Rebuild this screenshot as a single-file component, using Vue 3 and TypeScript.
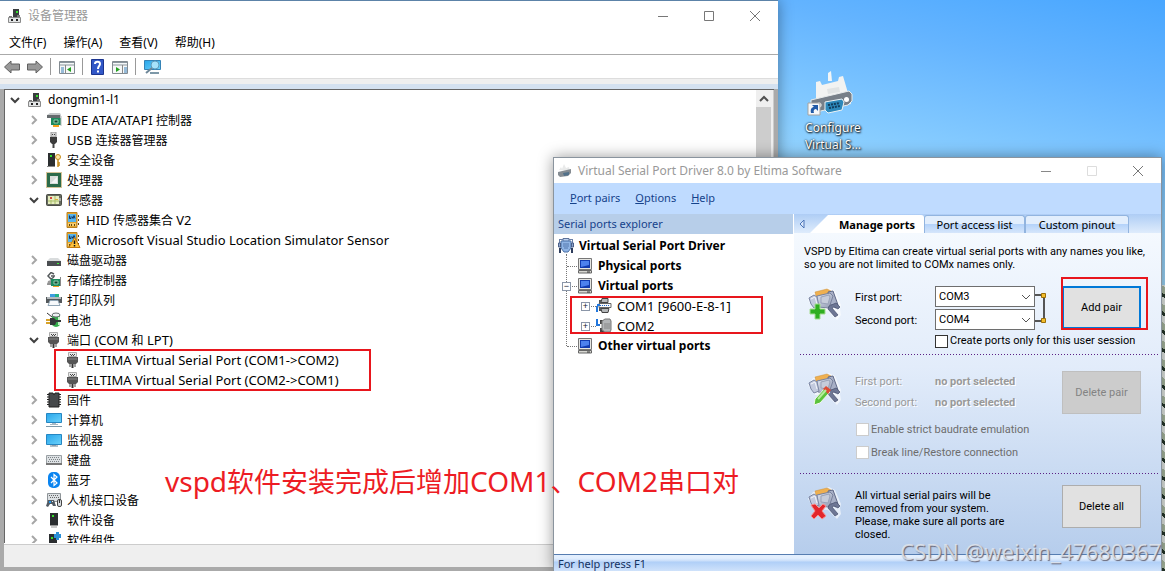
<script setup lang="ts">
import { ref } from 'vue'

interface Node {
  icon: string
  label: string
  level: number
  state?: 'open' | 'closed'
}

interface Run {
  text: string
  han: boolean
}

const splitRuns = (label: string): Run[] =>
  label
    .split(/([\u3001\u4e00-\u9fff]+)/)
    .filter((text) => text !== '')
    .map((text) => ({ text, han: /[\u3001\u4e00-\u9fff]/.test(text) }))

const menus: string[] = ['文件(F)', '操作(A)', '查看(V)', '帮助(H)']
const note = 'vspd软件安装完成后增加COM1、COM2串口对'

const devices: Node[] = [
  { icon: 'pc', label: 'dongmin1-l1', level: 0, state: 'open' },
  { icon: 'ide', label: 'IDE ATA/ATAPI 控制器', level: 1, state: 'closed' },
  { icon: 'usb', label: 'USB 连接器管理器', level: 1, state: 'closed' },
  { icon: 'security', label: '安全设备', level: 1, state: 'closed' },
  { icon: 'cpu', label: '处理器', level: 1, state: 'closed' },
  { icon: 'sensor', label: '传感器', level: 1, state: 'open' },
  { icon: 'hid', label: 'HID 传感器集合 V2', level: 2 },
  { icon: 'hidwarn', label: 'Microsoft Visual Studio Location Simulator Sensor', level: 2 },
  { icon: 'disk', label: '磁盘驱动器', level: 1, state: 'closed' },
  { icon: 'storage', label: '存储控制器', level: 1, state: 'closed' },
  { icon: 'printer', label: '打印队列', level: 1, state: 'closed' },
  { icon: 'battery', label: '电池', level: 1, state: 'closed' },
  { icon: 'port', label: '端口 (COM 和 LPT)', level: 1, state: 'open' },
  { icon: 'port', label: 'ELTIMA Virtual Serial Port (COM1->COM2)', level: 2 },
  { icon: 'port', label: 'ELTIMA Virtual Serial Port (COM2->COM1)', level: 2 },
  { icon: 'firmware', label: '固件', level: 1, state: 'closed' },
  { icon: 'computer', label: '计算机', level: 1, state: 'closed' },
  { icon: 'monitor', label: '监视器', level: 1, state: 'closed' },
  { icon: 'keyboard', label: '键盘', level: 1, state: 'closed' },
  { icon: 'bluetooth', label: '蓝牙', level: 1, state: 'closed' },
  { icon: 'input', label: '人机接口设备', level: 1, state: 'closed' },
  { icon: 'softdev', label: '软件设备', level: 1, state: 'closed' },
  { icon: 'softcomp', label: '软件组件', level: 1, state: 'closed' },
]

const tabs: string[] = ['Manage ports', 'Port access list', 'Custom pinout']
const activeTab = ref(0)
const firstPort = ref('COM3')
const secondPort = ref('COM4')
const sessionOnly = ref(false)
</script>

<template>
  <div class="desktop">
    <svg class="defs" aria-hidden="true">
      <defs>
        <linearGradient id="screen" x1="0" y1="0" x2="1" y2="1">
          <stop offset="0" stop-color="#27a5ea" /><stop offset="1" stop-color="#6cd2fb" />
        </linearGradient>
        <linearGradient id="plug" x1="0" y1="0" x2="1" y2="1">
          <stop offset="0" stop-color="#dfe4f0" /><stop offset="1" stop-color="#8f98b0" />
        </linearGradient>
      </defs>
      <symbol id="i-pc" viewBox="0 0 16 16">
        <path d="M6 1h6v9H6z" fill="#3a3d3f" /><path d="M9 3h2v2H9z" fill="#35e02c" />
        <path d="M2 8h3v3H2zM10 7h3v4h-3z" fill="#777" />
        <path d="M1.500 9.500h12v5h-12z" fill="#e2e4e5" stroke="#8a8a8a" /><path d="M4 11h2v2H4zM9 11h2v2H9z" fill="#222" />
      </symbol>
      <symbol id="i-ide" viewBox="0 0 16 16">
        <path d="M1 3l3-2h10l1 2v3H1z" fill="#c4c7c9" /><path d="M1 3h13v3H1z" fill="#666b6e" />
        <path d="M5 6h10v7H5z" fill="#1e8a5f" /><path d="M8 8h4v3H8z" fill="#10452f" stroke="#8ed0ae" />
        <path d="M7 13h6v2H7z" fill="#f5a01d" /><path d="M15 4v10" stroke="#bbb" />
      </symbol>
      <symbol id="i-usb" viewBox="0 0 16 16">
        <path d="M5 0h5v5H5z" fill="#d5d5d5" stroke="#999" /><path d="M6 2h1v1H6zM8 2h1v1H8z" fill="#444" />
        <path d="M4 5h7v5l-2 2H6l-2-2z" fill="#3c3c3c" /><path d="M7.500 12v4" stroke="#444" stroke-width="2" />
      </symbol>
      <symbol id="i-security" viewBox="0 0 16 16">
        <path d="M2 1h7v13H2z" fill="#2b2e30" /><path d="M4 3h2v2H4z" fill="#35e02c" /><path d="M1 14h8v1H1z" fill="#888" />
        <circle cx="12" cy="5" r="2.500" fill="#ffe7a6" stroke="#c78d1c" /><path d="M12 7.500V15M12 11h2M12 13h2" stroke="#c78d1c" stroke-width="1.500" />
      </symbol>
      <symbol id="i-cpu" viewBox="0 0 16 16">
        <rect x="0.500" y="0.500" width="15" height="15" fill="none" stroke="#a98630" stroke-dasharray="1 1" />
        <path d="M1 1h14v14H1z" fill="#2c6b4a" /><path d="M4 4h8v8H4z" fill="#d8ddda" /><path d="M5 11l6-6v6z" fill="#f4f6f5" />
      </symbol>
      <symbol id="i-sensor" viewBox="0 0 16 16">
        <rect x="0.500" y="2.500" width="15" height="11" rx="1" fill="#686b60" stroke="#4a4d45" />
        <path d="M2 4h11v8H2z" fill="#e6edc0" /><path d="M5 8v4M2 9h11M9 4v8" stroke="#a9bf6b" />
        <path d="M4 5h2v2H4z" fill="#d5483f" /><path d="M9 7h3v1H9z" fill="#e0b33c" /><path d="M14 6v3" stroke="#eee" />
      </symbol>
      <symbol id="i-hid" viewBox="0 0 16 16">
        <path d="M2 0.500h10v15H2z" fill="#e4a62d" stroke="#b98020" /><path d="M3 2h8v8H3z" fill="#55b4ee" />
        <path d="M4.500 3.500v3h1.500v-2M7 4.500l1 2 1-3 1 3" fill="none" stroke="#12365e" />
        <path d="M3 11h8v3H3z" fill="#f4cd72" /><path d="M4 12h1v2H4zM6 12h1v2H6zM9 12h1v2H9zM13 3h1v2h-1zM13 7h1v2h-1zM13 11h1v2h-1z" fill="#64490e" />
      </symbol>
      <symbol id="i-hidwarn" viewBox="0 0 16 16">
        <use href="#i-hid" /><path d="M9.500 5.500l5.500 10H4z" fill="#ffc33b" stroke="#c47a0a" />
        <path d="M9.500 8.500V12M9.500 13v1.500" stroke="#111" stroke-width="1.500" />
      </symbol>
      <symbol id="i-disk" viewBox="0 0 16 16">
        <path d="M1 9l3-3h8l3 3z" fill="#d9dcdd" /><path d="M1 9h14v5H1z" fill="#4a4e51" /><path d="M11 11h2v1h-2z" fill="#3ef23a" />
      </symbol>
      <symbol id="i-storage" viewBox="0 0 16 16">
        <path d="M8 2L5 0.500 2 4l3 3 3-2M5 4h4" fill="none" stroke="#555a5c" stroke-width="1.500" /><path d="M2 9l3-1v5H1z" fill="#999" />
        <path d="M5 7h9v7H5z" fill="#1e8a5f" /><path d="M8 9h4v3H8z" fill="#10452f" stroke="#8ed0ae" />
        <path d="M7 14h6v1H7z" fill="#f5a01d" /><path d="M14.500 5v9M1 12h4" stroke="#888" />
      </symbol>
      <symbol id="i-printer" viewBox="0 0 16 16">
        <path d="M4 2h9v3H4z" fill="#3d9de0" /><path d="M9 2h4v3H9z" fill="#23b285" />
        <path d="M0 5h16v6H0z" fill="#53585b" /><path d="M1 5h14v2H1z" fill="#b5babd" /><path d="M4 8.500h8l2 5H2z" fill="#f7f9fb" stroke="#90a5b5" />
      </symbol>
      <symbol id="i-battery" viewBox="0 0 16 16">
        <path d="M6 3h8v10q-4 4-8 0z" fill="#35ad4c" /><ellipse cx="10" cy="3" rx="4" ry="2" fill="#eef2f3" stroke="#676c6e" />
        <path d="M12 5h2v8h-2z" fill="#c5f2c9" /><path d="M1 1l5 4" stroke="#333" /><path d="M4 6h4l3 3-2 4H4z" fill="#34383a" />
        <path d="M0 8h4M0 11h4" stroke="#d7a22a" stroke-width="2" /><path d="M10 9h5" stroke="#34383a" stroke-width="2" />
      </symbol>
      <symbol id="i-port" viewBox="0 0 16 16">
        <path d="M3.500 0.500h8v4h-8z" fill="#e9e9e9" stroke="#aaa" /><path d="M5 2h1v1H5zM7 2h1v1H7zM9 2h1v1H9zM6 3h1v1H6zM8 3h1v1H8z" fill="#444" />
        <path d="M2 5h11v5l-2 2H4l-2-2z" fill="#555" /><path d="M3 7h9" stroke="#888" />
        <path d="M5 12v3M10 12v3" stroke="#444" /><path d="M7.500 12v4" stroke="#333" stroke-width="2" />
      </symbol>
      <symbol id="i-firmware" viewBox="0 0 16 16">
        <path d="M1 2.500h14M1 5h14M1 7.500h14M1 10h14M1 12.500h14" stroke="#222" stroke-dasharray="3 8" />
        <path d="M3 1h4l1 2 1-2h4v14H3z" fill="#46494b" stroke="#222" />
      </symbol>
      <symbol id="i-monitor" viewBox="0 0 16 16">
        <path d="M0.500 2.500h15v10h-15z" fill="url(#screen)" stroke="#2686c2" /><path d="M6 13h4v1H6z" fill="#a9bac6" /><path d="M4 14h8" stroke="#6d808d" />
      </symbol>
      <symbol id="i-computer" viewBox="0 0 16 16">
        <path d="M0.500 1.500h15v9h-15z" fill="url(#screen)" stroke="#2686c2" /><path d="M6 11h4v1H6z" fill="#a9bac6" />
        <path d="M4 12.500h8" stroke="#aab7c0" /><path d="M0 14.500h16" stroke="#7d98a8" />
      </symbol>
      <symbol id="i-keyboard" viewBox="0 0 16 16">
        <path d="M0.500 3.500h15v9h-15z" fill="#dde1e4" stroke="#9aa0a4" />
        <path d="M2 5.500h12M3 7.500h11M2 9.500h12" stroke="#7d8387" stroke-dasharray="1 1" /><path d="M0 12h16" stroke="#777" stroke-width="2" />
      </symbol>
      <symbol id="i-bluetooth" viewBox="0 0 16 16">
        <rect x="2" y="0" width="12" height="16" rx="5" fill="#0a84f0" /><path d="M5 5l6 6-3 2.500v-11L11 5l-6 6" fill="none" stroke="#fff" stroke-width="1.200" />
      </symbol>
      <symbol id="i-input" viewBox="0 0 16 16">
        <path d="M1.500 1.500h13v8h-13z" fill="#dce0e3" stroke="#8e9498" /><path d="M3 3.500h10M4 5.500h9" stroke="#666" stroke-dasharray="1 1" />
        <path d="M0 14l2-6h6l2 6H7l-1-2H4l-2 3z" fill="#515a63" /><path d="M3 9h2v2H3z" fill="#2495e8" /><path d="M6 9h1v1H6z" fill="#eee" />
        <rect x="11.500" y="7.500" width="4" height="7" rx="1.500" fill="#d7dbdf" stroke="#444" /><path d="M13.500 8v3" stroke="#333" />
      </symbol>
      <symbol id="i-softdev" viewBox="0 0 16 16">
        <path d="M4 1h8v12H4z" fill="#2b2e30" /><path d="M6 3h2v2H6z" fill="#35e02c" /><path d="M4 13.500h8M5 15h6" stroke="#999" />
      </symbol>
      <symbol id="i-softcomp" viewBox="0 0 16 16">
        <path d="M3 2h8v12H3z" fill="#2b2e30" /><path d="M5 5h2v2H5z" fill="#35e02c" /><path d="M3 14.500h8" stroke="#999" />
        <path d="M8 2h2V0h3v2h2v4h-2v2h-3V6H8z" fill="#2b8fd6" />
      </symbol>
      <symbol id="i-screen" viewBox="0 0 16 16">
        <path d="M1.500 0.500h13v11h-13z" fill="#e6e6e2" stroke="#777" /><path d="M3 2h10v8H3z" fill="#123cb0" /><path d="M4 3h8v4L4 9z" fill="#4d82ee" />
        <path d="M1.500 12.500h13v2.500h-13z" fill="#d7d7d2" stroke="#666" /><path d="M10 14h3" stroke="#333" />
      </symbol>
      <symbol id="i-db9" viewBox="0 0 16 16">
        <path d="M5 0.500h6v3H5z" fill="#bdd2f0" stroke="#5c7299" />
        <path d="M1 1.500h4M11 1.500h4M1.500 1v4M14.500 1v4" stroke="#6a7fa6" />
        <path d="M3 3h10v7l-3 4H6l-3-4z" fill="#8fb4e4" stroke="#4b70a6" /><path d="M5 6h6M5 8h6M6 10h4" stroke="#5579ae" />
        <path d="M0.500 5v4h2V5zM13.500 5v4h2V5z" fill="#8fa6cc" stroke="#4a5f88" /><path d="M2 10v5M14 10v5" stroke="#2d3c5c" stroke-width="2" />
      </symbol>
      <symbol id="i-com1" viewBox="0 0 16 16">
        <path d="M6 0.500h6v4H5zM5 10.500h8l-1 4H6z" fill="#b5b8ba" stroke="#444" /><path d="M3 2h2v3H3zM3 10h2v3H3z" fill="#555" /><path d="M3 5.500h12v4H3z" fill="#fafafa" stroke="#666" />
        <path d="M4 7.500h10" stroke="#1c66cc" stroke-dasharray="1 1" /><path d="M1 14V7h3" fill="none" stroke="#2277dd" stroke-width="2" stroke-dasharray="6 1" />
      </symbol>
      <symbol id="i-com2" viewBox="0 0 16 16">
        <path d="M4 2h4v4H4zM4 10h4v4H4z" fill="#444" /><path d="M6 3l3-2h5l1 2v9l-1 2H9l-3-2z" fill="#b3b5b7" stroke="#777" />
        <path d="M9 5v6M11 5v6M13 5v6" stroke="#888" /><path d="M1 1v6h3" fill="none" stroke="#2277dd" stroke-width="2" />
      </symbol>
      <symbol id="i-plug" viewBox="0 0 34 34">
        <path d="M0 12L5 5l16-5 6 3 6 14-1 4 1 6-4 5-9-9-13-1z" fill="#fff" opacity="0.600" />
        <path d="M7 4l12-3 4 2-2 3-13 2z" fill="#efb050" stroke="#c88d35" stroke-width="0.500" />
        <path d="M20 4l5-1 5 14-2 3-6-4z" fill="#a7afc6" stroke="#5f6886" />
        <path d="M9 8l13-3 3 3-4 12-11-1z" fill="url(#plug)" stroke="#7a839e" /><path d="M13 9l8-2 1 2-2 7-7-1z" fill="#c6ccda" stroke="#99a2b8" />
        <path d="M1 10l5-3 3 2 2 9-5 2-3-4z" fill="#c3cade" stroke="#7b86a3" /><path d="M3 11l4-2 2 7" fill="none" stroke="#f2f5fb" />
        <path d="M21 18l7-3 4 4-2 2-4-2-2 1 6 7-3 2-7-8z" fill="#6d7694" stroke="#464f6d" stroke-width="0.700" />
      </symbol>
    </svg>

    <section class="shortcut">
      <svg width="52" height="48" viewBox="0 0 52 48">
        <path d="M21 2l3-2 1 10h-4z" fill="#f2f5f6" /><path d="M9 11l4-1 2 4 16-4 1-4 4-1 5 17 3 11-38 8 3-13z" fill="#f2f3f2" />
        <path d="M20 18l12-2 1 5-12 2z" fill="#e1e4e4" />
        <path d="M4 29l38-9 3 3v7l-4 4-32 7-5-4z" fill="#777f88" stroke="#e7ebec" />
        <path d="M18 31l17-3 2 3-2 8-14 3-3-3z" fill="#2d88ba" stroke="#eef3f5" /><circle cx="39.500" cy="28.500" r="2.500" fill="#fff" />
        <circle cx="12" cy="34" r="2.500" fill="#fff" /><path d="M21 34l12-2M22 37l11-2" stroke="#123d5d" stroke-width="2" stroke-dasharray="2 1" />
        <path d="M1 32h12v12H1z" fill="#f6f8fa" stroke="#a5a3a0" /><path d="M4 42c-1-4 1-6 3-6l-2-2h6v6l-2-2c-2 0-3 2-2 4z" fill="#225ba8" />
      </svg>
      <span>Configure<br>Virtual S...</span>
    </section>

    <section class="window manager">
      <header class="titlebar">
        <svg class="ico"><use href="#i-pc" /></svg>
        <h1>设备管理器</h1>
        <button aria-label="最小化"><svg width="12" height="12" viewBox="0 0 12 12"><path d="M1 6.500h10" stroke="#777" /></svg></button>
        <button aria-label="最大化"><svg width="12" height="12" viewBox="0 0 12 12"><path d="M1.500 1.500h9v9h-9z" fill="none" stroke="#777" /></svg></button>
        <button aria-label="关闭"><svg width="12" height="12" viewBox="0 0 12 12"><path d="M1 1l10 10M11 1L1 11" stroke="#777" /></svg></button>
      </header>
      <nav class="menubar"><button v-for="m in menus" :key="m">{{ m }}</button></nav>
      <div class="toolbar">
        <button aria-label="后退"><svg width="16" height="16" viewBox="0 0 16 16"><path d="M0.500 8L7 2v3h8.500v6H7v3z" fill="#999" stroke="#606060" /></svg></button>
        <button aria-label="前进"><svg width="16" height="16" viewBox="0 0 16 16"><path d="M15.500 8L9 2v3H0.500v6H9v3z" fill="#999" stroke="#606060" /></svg></button>
        <i class="sep"></i>
        <button aria-label="显示"><svg width="16" height="16" viewBox="0 0 16 16"><path d="M0.500 2.500h15v12h-15z" fill="#f6f8f8" stroke="#838b91" /><path d="M1 3.500h14M1 6h14" stroke="#8b969e" stroke-width="1" /><path d="M2 9h3M2 11h3M2 13h3" stroke="#397fb8" /><path d="M6.500 6v8" stroke="#888" /><path d="M12 8v5L8 10.500z" fill="#22a01e" /></svg></button>
        <i class="sep"></i>
        <button aria-label="帮助"><svg width="14" height="16" viewBox="0 0 14 16"><path d="M0.500 0.500h12v15h-12z" fill="#3157c7" stroke="#1b348f" /><path d="M4 5c0-3 5-3 5 0 0 2-2 2-2 5M7 11.500v2" fill="none" stroke="#fff" stroke-width="2" /></svg></button>
        <button aria-label="操作"><svg width="16" height="16" viewBox="0 0 16 16"><path d="M0.500 2.500h15v12h-15z" fill="#f6f8f8" stroke="#838b91" /><path d="M1 3.500h14M1 6h14" stroke="#8b969e" /><path d="M12 9h3M12 11h3M12 13h3" stroke="#397fb8" /><path d="M10.500 6v8" stroke="#888" /><path d="M4 8v5l4-2.500z" fill="#22a01e" /></svg></button>
        <i class="sep"></i>
        <button aria-label="扫描"><svg width="17" height="16" viewBox="0 0 17 16"><path d="M0.500 1.500h16v9h-16z" fill="url(#screen)" stroke="#3483b6" /><path d="M6 14h9" stroke="#7d98a8" stroke-width="2" /><circle cx="11" cy="6" r="4" fill="#a6e2fb" stroke="#5e9abb" /><path d="M8 9l-6 5" stroke="#6e8798" stroke-width="2" /></svg></button>
      </div>
      <div class="gutter"></div>
      <div class="panel">
        <ul class="devices">
          <li v-for="(d, i) in devices" :key="i" :class="'l' + d.level">
            <button v-if="d.state" class="twist" :aria-label="d.label">
              <svg v-if="d.state === 'open'" width="10" height="10" viewBox="0 0 10 10"><path d="M1 3l4 4 4-4" fill="none" stroke="#404040" stroke-width="2" /></svg>
              <svg v-else width="10" height="10" viewBox="0 0 10 10"><path d="M3 1l4 4-4 4" fill="none" stroke="#a6a6a6" stroke-width="2" /></svg>
            </button>
            <svg class="ico"><use :href="'#i-' + d.icon" /></svg>
            <span class="label"><span v-for="(r, k) in splitRuns(d.label)" :key="k" :class="{ han: r.han }">{{ r.text }}</span></span>
          </li>
        </ul>
        <div class="scrollbar"><button aria-label="向上滚动"><svg width="10" height="10" viewBox="0 0 10 10"><path d="M1 7l4-4 4 4" fill="none" stroke="#505050" stroke-width="2" /></svg></button><div class="thumb"></div></div>
      </div>
      <footer class="managerStatus"></footer>
    </section>

    <section class="window vspd">
      <header class="titlebar">
        <svg class="ico" viewBox="0 0 16 16"><path d="M2 7l2-3 1 2 2-5 2 4 3-1 1 4z" fill="#e9eaea" /><path d="M1 9l13-3v4l-3 3-8 1-2-2z" fill="#858c92" /><path d="M6 10l6-1v3l-5 1z" fill="#52718a" /></svg>
        <h1>Virtual Serial Port Driver 8.0 by Eltima Software</h1>
        <button aria-label="Minimize"><svg width="12" height="12" viewBox="0 0 12 12"><path d="M1 6.500h10" stroke="#888" /></svg></button>
        <button aria-label="Maximize" disabled><svg width="12" height="12" viewBox="0 0 12 12"><path d="M1.500 1.500h9v9h-9z" fill="none" stroke="#ddd" /></svg></button>
        <button aria-label="Close"><svg width="12" height="12" viewBox="0 0 12 12"><path d="M1 1l10 10M11 1L1 11" stroke="#777" /></svg></button>
      </header>
      <nav class="menubar"><button><u>P</u>ort pairs</button><button><u>O</u>ptions</button><button><u>H</u>elp</button></nav>
      <div class="body">
        <aside class="explorer">
          <h2>Serial ports explorer</h2>
          <ul>
            <li class="root"><svg class="ico"><use href="#i-db9" /></svg><b>Virtual Serial Port Driver</b></li>
            <li class="branch"><i class="dots"></i><svg class="ico"><use href="#i-screen" /></svg><b>Physical ports</b></li>
            <li class="branch"><button class="box" aria-label="Collapse">−</button><i class="dots"></i><svg class="ico"><use href="#i-screen" /></svg><b>Virtual ports</b></li>
            <li class="leaf"><button class="box" aria-label="Expand COM1">+</button><i class="dots"></i><svg class="ico"><use href="#i-com1" /></svg><span>COM1 [9600-E-8-1]</span></li>
            <li class="leaf"><button class="box" aria-label="Expand COM2">+</button><i class="dots"></i><svg class="ico"><use href="#i-com2" /></svg><span>COM2</span></li>
            <li class="branch"><i class="dots"></i><svg class="ico"><use href="#i-screen" /></svg><b>Other virtual ports</b></li>
          </ul>
        </aside>
        <main class="work">
          <div class="tabs">
            <button class="arrow" aria-label="Scroll tabs"><svg width="6" height="10" viewBox="0 0 6 10"><path d="M5 1v8L1 5z" fill="#dbe8fa" stroke="#4c75b8" /></svg></button>
            <button v-for="(t, i) in tabs" :key="t" class="tab" :class="{ active: activeTab === i }" @click="activeTab = i">{{ t }}</button>
          </div>
          <p class="intro">VSPD by Eltima can create virtual serial ports with any names you like,<br>so you are not limited to COMx names only.</p>
          <section class="task add">
            <svg class="big" viewBox="0 0 34 34"><use href="#i-plug" /><path d="M7 16h5v5h5v5h-5v5H7v-5H2v-5h5z" fill="#2fae20" stroke="#a4dd91" /></svg>
            <div class="fields">
              <label for="first">First port:</label>
              <div class="combo"><select id="first" v-model="firstPort"><option>COM3</option></select><svg width="10" height="6" viewBox="0 0 10 6"><path d="M1 1l4 4 4-4" fill="none" stroke="#555" /></svg></div>
              <label for="second">Second port:</label>
              <div class="combo"><select id="second" v-model="secondPort"><option>COM4</option></select><svg width="10" height="6" viewBox="0 0 10 6"><path d="M1 1l4 4 4-4" fill="none" stroke="#555" /></svg></div>
            </div>
            <svg class="link" width="13" height="32" viewBox="0 0 13 32"><path d="M0 3h9v26H0" fill="none" stroke="#555" stroke-width="2" /><path d="M6.500 1.500h4v4h-4zM6.500 26.500h4v4h-4z" fill="#f3bd2c" stroke="#9b6f08" /></svg>
            <div class="primary"><button class="action">Add pair</button><i class="mark"></i></div>
            <label class="check session"><input v-model="sessionOnly" type="checkbox">Create ports only for this user session</label>
          </section>
          <section class="task remove">
            <svg class="big" viewBox="0 0 34 34"><use href="#i-plug" /><path d="M7 26l10-11 5 4-10 11-6 2z" fill="#5bc33c" stroke="#f1f8ed" /><path d="M15 16l3-3 5 4-3 4z" fill="#dc4b35" /><path d="M10 26l8-9" stroke="#b6eb9b" stroke-width="2" /></svg>
            <dl class="fields dim"><dt>First port:</dt><dd>no port selected</dd><dt>Second port:</dt><dd>no port selected</dd></dl>
            <button class="action" disabled>Delete pair</button>
            <div class="options">
              <label class="check"><input type="checkbox" disabled>Enable strict baudrate emulation</label>
              <label class="check"><input type="checkbox" disabled>Break line/Restore connection</label>
            </div>
          </section>
          <section class="task clear">
            <svg class="big" viewBox="0 0 34 34"><use href="#i-plug" /><path d="M3 18l4-1 4 4 4-4 3 2-4 5 4 5-4 3-4-4-4 4-3-3 4-5z" fill="#e2262b" stroke="#f68f8c" /></svg>
            <p>All virtual serial pairs will be<br>removed from your system.<br>Please, make sure all ports are<br>closed.</p>
            <button class="action">Delete all</button>
          </section>
        </main>
      </div>
      <footer class="help">For help press F1</footer>
    </section>

    <i class="mark portsMark"></i>
    <i class="mark comMark"></i>
    <p class="note"><span v-for="(r, k) in splitRuns(note)" :key="k" :class="{ han: r.han }">{{ r.text }}</span></p>
    <p class="watermark">CSDN @weixin_47680367</p>
  </div>
</template>

<style>
body { margin: 0; }
</style>

<style scoped>
.desktop {
  position: relative; min-height: 100vh; overflow: hidden; color: #000;
  font: 12px/20px "Noto Sans", "Noto Sans CJK SC", sans-serif;
  background: repeating-linear-gradient(35deg, #24352a 0 3px, #a9b9a0 3px 9px, #e3e8e4 9px 15px) 0 285px no-repeat,
    linear-gradient(193deg, #48a6ff 0, #64b4ff 90px, #8bcfff 210px, #9ed5f6 285px);
}
* { box-sizing: border-box; }
h1, h2, p, ul, dl, dd { margin: 0; padding: 0; font-size: inherit; font-weight: inherit; }
ul { list-style: none; }
button { margin: 0; padding: 0; border: 0; background: none; font: inherit; color: inherit; }
svg { display: block; flex: none; }
.defs { position: absolute; width: 0; height: 0; }
.ico { width: 16px; height: 16px; flex: none; }

.window { position: absolute; bottom: 0; display: flex; flex-direction: column; box-shadow: 0 0 14px rgba(0, 0, 0, 0.4); }
.manager { top: 0; left: 0; right: 387px; background: #fff; border-top: 1px solid #5c83a8; }
.titlebar { display: flex; align-items: center; background: #fff; color: #999; }
.titlebar h1 { flex: 1; white-space: nowrap; }
.titlebar button { width: 46px; display: flex; justify-content: center; }
.manager .titlebar { height: 30px; padding-left: 7px; }
.manager .titlebar h1 { padding-left: 5px; }
.menubar { display: flex; }
.manager .menubar { height: 23px; padding-left: 9px; gap: 17px; }
.toolbar { height: 24px; border-top: 1px solid #aaa; padding-left: 4px; display: flex; align-items: center; gap: 7px; }
.sep { width: 1px; height: 17px; background: #999; }
.sep + button { margin-left: 1px; }
.gutter { height: 11px; background: linear-gradient(#ddd 0 1px, #efefef 1px 6px, #d4e1f0 6px); flex: none; }
.panel { flex: 1; min-height: 0; display: flex; border-left: 4px solid #aaa; border-right: 4px solid #aaa; box-shadow: inset 1px 1px #666; }
.devices { flex: 1; padding: 1px 0 0 6px; overflow: hidden; }
.devices li { display: flex; align-items: center; height: 20px; white-space: nowrap; }
.devices .l1 { padding-left: 19px; }
.devices .l2 { padding-left: 55px; }
.devices .ico { margin: 0 5px 0 7px; }
.devices .l2 .ico { margin-left: 0; }
.label { font-size: 13px; white-space: pre; }
.devices .l0 .label, .label .han { font-size: 12px; }
.twist { width: 10px; }
.scrollbar { width: 18px; margin-top: 1px; padding-right: 2px; display: flex; flex-direction: column; background: #efefef; border-right: 1px solid #ccc; }
.scrollbar button { height: 17px; display: grid; place-items: center; }
.thumb { flex: 1; background: #cdcdcd; }
.managerStatus { height: 28px; flex: none; border: solid #aaa; border-width: 0 4px 4px; background: linear-gradient(#fff 0 1px, #ccc 1px 2px, #efefef 2px); }

.vspd { top: 157px; left: 553px; right: 3px; background: #bfdbff; border: 1px solid #8a949e; border-bottom: 0; }
.vspd .titlebar { height: 25px; padding-left: 3px; }
.vspd .titlebar h1 { padding-left: 5px; }
.vspd .menubar { height: 31px; align-items: center; padding: 0 0 2px 16px; gap: 15px; color: #15428b; font-size: 11px; }
.body { flex: 1; min-height: 0; display: flex; background: #fff; }
.explorer { width: 240px; flex: none; }
.explorer h2 { height: 20px; margin-right: 1px; padding-left: 4px; background: #b7cee9; color: #15428b; font-size: 11px; }
.explorer ul { padding-top: 2px; position: relative; }
.explorer ul::before { content: ""; position: absolute; left: 12px; top: 20px; height: 92px; border-left: 1px dotted #777; }
.explorer li { display: flex; align-items: center; height: 20px; gap: 5px; position: relative; white-space: nowrap; }
.root { padding-left: 4px; }
.branch { padding-left: 23px; }
.leaf { padding-left: 42px; font-size: 13px; }
.dots { position: absolute; left: 13px; width: 10px; border-top: 1px dotted #777; }
.leaf .dots { left: 32px; }
.box { position: absolute; z-index: 1; left: 8px; width: 9px; height: 9px; border: 1px solid #8b96a8; background: #fff; font: 9px/7px "Liberation Sans", sans-serif; color: #123; }
.leaf .box { left: 27px; }
.work { flex: 1; min-width: 0; display: flex; flex-direction: column; background: linear-gradient(#f7fbff, #e2ecfa 45%, #b6cdec); }
.tabs { height: 19px; display: flex; background: linear-gradient(#aecdf5, #dfecfc); font-size: 11px; }
.arrow { width: 16px; display: grid; place-items: center; }
.tab { height: 18px; margin-top: 1px; width: 101px; border: 1px solid #92b4df; border-bottom: 0; border-radius: 3px 3px 0 0; background: linear-gradient(#e2eefd 45%, #b5d3fa 50%, #d6e6fb); line-height: 17px; white-space: nowrap; }
.tab:last-child { width: 104px; }
.tab.active { width: 114px; padding-left: 20px; border: 0; background: #fff; font-weight: 700; clip-path: polygon(0 100%, 18px 0, 100% 0, 100% 100%); }
.intro { padding: 12px 0 0 10px; line-height: 13px; font-family: Roboto, sans-serif; font-size: 11px; white-space: nowrap; }
.task { display: grid; grid-template-columns: 47px 180px 1fr 79px; align-content: start; padding: 0 20px 0 14px; font-family: Roboto, sans-serif; font-size: 11px; line-height: 20px; }
.add { padding-top: 15px; height: 83px; }
.remove, .clear { background: repeating-linear-gradient(90deg, #5b2185 0 1px, transparent 1px 3px) 6px 0 / calc(100% - 8px) 1px no-repeat; }
.remove { padding-top: 17px; height: 119px; }
.clear { padding-top: 12px; height: 81px; }
.big { width: 34px; height: 34px; margin-top: 2px; }
.fields { display: grid; grid-template-columns: 80px 100px; align-content: start; white-space: nowrap; line-height: 24px; }
.dim { line-height: 21px; color: #999; text-shadow: 1px 1px #fff; }
.dim dd { font-weight: 700; }
.fields label { height: 23px; }
.combo { position: relative; height: 23px; }
.combo select { display: block; width: 100%; height: 21px; padding: 0 3px; appearance: none; border: 1px solid #6e6e6e; border-radius: 0; background: #fff; font: inherit; line-height: 18px; color: #000; }
.combo svg { position: absolute; right: 4px; top: 8px; pointer-events: none; }
.link { margin-top: 6px; }
.action { grid-column: 4; width: 79px; height: 43px; border: 1px solid #adadad; background: #e1e1e1; }
.action:disabled { background: #ccc; border-color: #bfbfbf; color: #838383; }
.primary { position: relative; grid-column: 4; }
.primary .action { border: 2px solid #0078d7; }
.primary .mark { top: -9px; left: -1px; width: 87px; height: 53px; }
.check { display: flex; align-items: center; gap: 2px; white-space: nowrap; }
.check input { flex: none; width: 13px; height: 13px; margin: 0; appearance: none; border: 1px solid #333; background: #fff; }
.check input:disabled { border-color: #ccc; }
.session { grid-column: 2 / -1; padding-left: 80px; height: 18px; }
.options { grid-column: 2 / -1; padding: 4px 0 0 1px; line-height: 23px; color: #6d6d6d; }
.clear p { padding-top: 4px; line-height: 13px; white-space: nowrap; grid-column: 2 / 4; }
.help { height: 17px; flex: none; border-top: 1px solid #567db1; padding: 2px 0 0 4px; background: linear-gradient(#e3effe 0 3px, #c9defa 6px, #b0cff7 7px, #cfe2fb); color: #15325f; font-size: 11px; line-height: 14px; }

.mark { position: absolute; border: 2px solid #e8161d; pointer-events: none; }
.portsMark { left: 54px; top: 349px; width: 317px; height: 42px; }
.comMark { left: 570px; top: 296px; width: 193px; height: 38px; }
.note { position: absolute; left: 165px; top: 461px; font-size: 28px; line-height: 40px; color: #ed1c24; white-space: nowrap; }
.note .han { font-size: 27px; }
.watermark { position: absolute; right: 4px; bottom: 6px; font-size: 22px; line-height: 28px; color: rgba(225, 230, 237, 0.85); text-shadow: 1px 1px 1px #667; white-space: nowrap; }
.shortcut { position: absolute; left: 788px; top: 71px; width: 90px; display: flex; flex-direction: column; align-items: center; color: #fff; line-height: 17px; text-align: center; text-shadow: 1px 1px 2px #000, 0 0 2px #000; }
</style>
